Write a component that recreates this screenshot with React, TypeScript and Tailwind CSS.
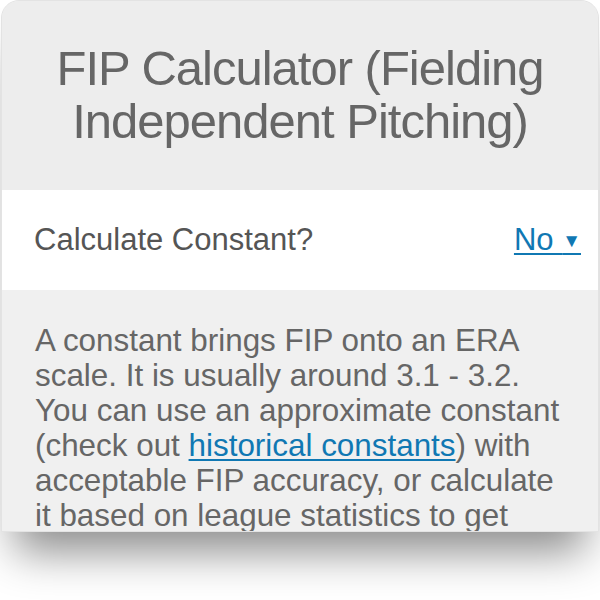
export default function App() {
  return (
    <div className="w-[600px] h-[600px] bg-white overflow-hidden" style={{ fontFamily: '"Liberation Sans", Arial, sans-serif' }}>
      {/* Calculator card, clipped at the bottom of the view */}
      <div className="mx-[1px] h-[532px] overflow-hidden rounded-t-[18px] border border-[#e3e3e3] bg-[#f0f0f0] shadow-[0_34px_44px_-14px_rgba(0,0,0,0.45)]">
        <div className="bg-[#ededed] px-4 pt-[41px] pb-[42px] text-center">
          <h1 className="text-[49px] leading-[53px] font-normal tracking-[-1px] text-[#666666]">
            FIP Calculator (Fielding Independent Pitching)
          </h1>
        </div>

        <div className="flex h-[100px] items-center justify-between bg-white pl-[32px] pr-[17px]">
          <span className="text-[31px] text-[#555555]">Calculate Constant?</span>
          <a href="#" className="text-[31px] text-[#1078b3] underline decoration-[2px] underline-offset-[3px]">
            No&nbsp;<span className="text-[19px] align-[3px]">▼</span>
          </a>
        </div>

        <p className="px-[33px] pt-[33px] text-[31.4px] leading-[35px] text-[#666666]">
          A constant brings FIP onto an ERA scale. It is usually around 3.1 - 3.2. You can use an approximate constant (check out{" "}
          <a href="#" className="text-[#1078b3] underline decoration-[2px] underline-offset-[3px]">historical constants</a>) with
          acceptable FIP accuracy, or calculate it based on league statistics to get
        </p>
      </div>
    </div>
  )
}
